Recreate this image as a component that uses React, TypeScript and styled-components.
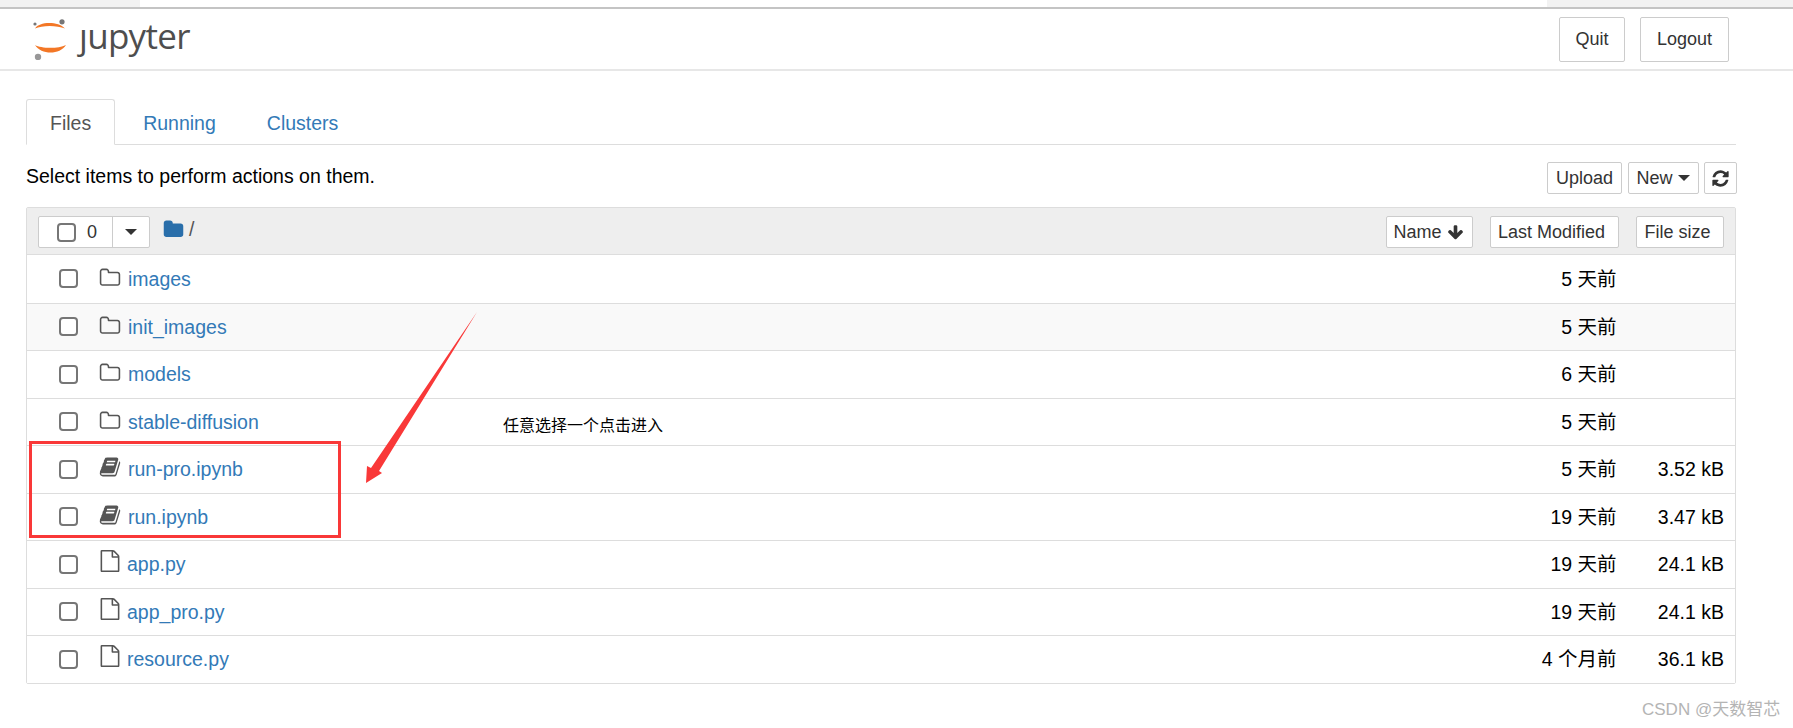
import React from "react";
import styled, { createGlobalStyle } from "styled-components";

const Global = createGlobalStyle`
  html, body { margin: 0; padding: 0; background: #fff; }
  body { font-family: "Liberation Sans", Arial, "Noto Sans CJK SC", sans-serif; color: #000; }
  * { box-sizing: border-box; }
`;

const Page = styled.div`
  position: relative;
  width: 1793px;
  height: 728px;
  overflow: hidden;
`;

const BrowserEdge = styled.div`
  height: 9px;
  background: #f2f2f2;
  border-bottom: 2px solid #c4c4c4;
  display: flex;
`;
const BrowserGap = styled.div`
  width: 1407px;
  height: 7px;
  margin-left: 140px;
  background: #fff;
`;

const Header = styled.header`
  height: 62px;
  border-bottom: 2px solid #e7e7e7;
  display: flex;
  align-items: flex-start;
  justify-content: space-between;
  padding: 8px 64px 0 33px;
`;

const Logo = styled.div`
  display: flex;
  align-items: center;
  height: 44px;
`;

const LogoText = styled.span`
  font-family: "Open Sans", sans-serif;
  font-size: 35px;
  line-height: 44px;
  color: #4e4e4e;
  margin-left: 10px;
  margin-top: -6px;
  letter-spacing: -0.7px;
`;

const HeaderActions = styled.div`
  display: flex;
  gap: 15px;
`;

const HeaderButton = styled.button`
  height: 45px;
  width: ${(p) => p.$w}px;
  border: 1px solid #ccc;
  border-radius: 2px;
  background: #fff;
  color: #333;
  font: 18px "Liberation Sans", sans-serif;
  padding: 0;
`;

const Main = styled.main`
  padding: 28px 57px 0 26px;
`;

const Tabs = styled.nav`
  height: 46px;
  display: flex;
  border-bottom: 1px solid #ddd;
`;

const Tab = styled.a`
  height: 46px;
  padding: 0 ${(p) => (p.$active ? 23 : 24)}px;
  margin-right: ${(p) => (p.$active ? 3 : 1)}px;
  line-height: 46px;
  font-size: 19.5px;
  color: ${(p) => (p.$active ? "#555" : "#337ab7")};
  background: ${(p) => (p.$active ? "#fff" : "transparent")};
  border: 1px solid ${(p) => (p.$active ? "#ddd" : "transparent")};
  border-bottom-color: ${(p) => (p.$active ? "#fff" : "transparent")};
  border-radius: 3px 3px 0 0;
`;

const ToolRow = styled.div`
  height: 62px;
  padding-top: 17px;
  display: flex;
  justify-content: space-between;
  align-items: flex-start;
`;

const Hint = styled.div`
  font-size: 19.5px;
  line-height: 28px;
`;

const ToolButtons = styled.div`
  display: flex;
  gap: 5.5px;
  margin-right: -1px;
`;

const SmallButton = styled.button`
  height: 32px;
  width: ${(p) => p.$w}px;
  display: inline-flex;
  align-items: center;
  justify-content: center;
  gap: 5px;
  border: 1px solid #ccc;
  border-radius: 2px;
  background: #fff;
  color: #333;
  font: 18px "Liberation Sans", sans-serif;
  padding: 0 ${(p) => p.$trail || 0}px 0 0;
`;

const Caret = styled.i`
  width: 0;
  height: 0;
  border-top: 6px solid #333;
  border-left: 6px solid transparent;
  border-right: 6px solid transparent;
`;

const Glyph = styled.svg`
  display: block;
  flex: none;
  fill: ${(p) => p.$color || "#333"};
`;

const List = styled.section`
  border: 1px solid #ddd;
  border-radius: 2px;
`;

const ListHead = styled.div`
  height: 47px;
  background: #eee;
  border-bottom: 1px solid #ddd;
  display: flex;
  align-items: flex-start;
  padding: 8px 11.5px 0 11px;
`;

const SelectGroup = styled.div`
  display: flex;
  height: 32px;
  width: 112px;
  border: 1px solid #ccc;
  border-radius: 2px;
  background: #fff;
`;

const SelectMain = styled.div`
  width: 74px;
  border-right: 1px solid #ccc;
  display: flex;
  align-items: center;
  padding-left: 18px;
  gap: 11px;
  font-size: 18px;
  color: #333;
`;

const SelectCaret = styled.div`
  flex: 1;
  display: flex;
  align-items: center;
  justify-content: center;
`;

const Crumb = styled.div`
  flex: 1;
  display: flex;
  align-items: flex-start;
  gap: 5px;
  margin-left: 13px;
  padding-top: 3px;
  color: #555;
  font-size: 19.5px;
  line-height: 20px;
`;

const SortButtons = styled.div`
  display: flex;
  gap: 17px;
`;

const Check = styled.input.attrs({ type: "checkbox" })`
  appearance: none;
  flex: none;
  margin: 0;
  width: 19px;
  height: 19px;
  background: #fff;
  border: 2px solid #767676;
  border-radius: 4px;
`;

const Row = styled.div`
  height: 47.5px;
  display: flex;
  align-items: center;
  padding: 0 11px 0 32px;
  background: ${(p) => (p.$shaded ? "#f9f9f9" : "#fff")};
  border-top: ${(p) => (p.$first ? "0" : "1px solid #ddd")};
  font-size: 19.5px;
  line-height: 24px;
`;

const IconSlot = styled.div`
  width: 22px;
  margin-left: 20.5px;
  margin-bottom: ${(p) => p.$lift}px;
  flex: none;
`;

const FileName = styled.a`
  flex: 1;
  margin-left: ${(p) => p.$gap}px;
  color: #337ab7;
`;

const Modified = styled.span`
  display: block;
  height: 24px;
  text-align: right;
`;

const Size = styled.span`
  display: block;
  height: 24px;
  width: 107.5px;
  text-align: right;
`;

const RedBox = styled.div`
  position: absolute;
  left: 29px;
  top: 441px;
  width: 312px;
  height: 97px;
  border: 3px solid #f93838;
`;

const ArrowMark = styled.svg`
  position: absolute;
  left: 360px;
  top: 305px;
`;

const Note = styled.div`
  position: absolute;
  left: 503px;
  top: 414px;
  font-size: 16px;
  line-height: 20px;
  color: #000;
  font-family: "Noto Sans CJK SC", sans-serif;
`;

const Watermark = styled.div`
  position: absolute;
  left: 1642px;
  top: 700px;
  font-size: 17px;
  line-height: 20px;
  color: #b4b4b4;
  white-space: nowrap;
  font-family: "Liberation Sans", "Noto Sans CJK SC", sans-serif;
`;

const PATHS = {
  folderO:
    "M1600 1312v-704q0-40-28-68t-68-28h-704q-40 0-68-28t-28-68v-64q0-40-28-68t-68-28h-320q-40 0-68 28t-28 68v960q0 40 28 68t68 28h1216q40 0 68-28t28-68zm128-704v704q0 92-66 158t-158 66h-1216q-92 0-158-66t-66-158v-960q0-92 66-158t158-66h320q92 0 158 66t66 158v32h672q92 0 158 66t66 158z",
  folder:
    "M1728 608v704q0 92-66 158t-158 66h-1216q-92 0-158-66t-66-158v-960q0-92 66-158t158-66h320q92 0 158 66t66 158v32h672q92 0 158 66t66 158z",
  file:
    "M1596 380q28 28 48 76t20 88v1152q0 40-28 68t-68 28h-1344q-40 0-68-28t-28-68v-1600q0-40 28-68t68-28h896q40 0 88 20t76 48zm-444-244v376h376q-10-29-22-41l-313-313q-12-12-41-22zm384 1528v-1024h-416q-40 0-68-28t-28-68v-416h-768v1536h1280z",
  book:
    "M1703 478q40 57 18 129l-275 906q-19 64-76.5 107.5t-122.5 43.5h-923q-77 0-148.5-53.5t-99.5-131.5q-24-67-2-127 0-4 3-27t4-37q1-8-3-21.5t-3-19.5q2-11 8-21t16.5-23.5 16.5-23.5q23-38 45-91.5t30-91.5q3-10 .5-30t-.5-28q3-11 17-28t17-23q21-36 42-92t25-90q1-9-2.5-32t.5-28q4-13 22-30.5t22-22.5q19-26 42.5-84.5t27.5-96.5q1-8-3-25.5t-2-26.5q2-8 9-18t18-23 17-21q8-12 16.5-30.5t15-35 16-36 19.5-32 26.5-23.5 36-11.5 47.5 5.5l-1 3q38-9 51-9h761q74 0 114 56t18 130l-274 906q-36 119-71.5 153.5t-128.5 34.5h-869q-27 0-38 15-11 16-1 43 24 70 144 70h923q29 0 56-15.5t35-41.5l300-987q7-22 5-57 38 15 59 43zm-1064 2q-4 13 2 22.5t20 9.5h608q13 0 25.5-9.5t16.5-22.5l21-64q4-13-2-22.5t-20-9.5h-608q-13 0-25.5 9.5t-16.5 22.5zm-83 256q-4 13 2 22.5t20 9.5h608q13 0 25.5-9.5t16.5-22.5l21-64q4-13-2-22.5t-20-9.5h-608q-13 0-25.5 9.5t-16.5 22.5z",
  refresh:
    "M1639 1056q0 5-1 7-64 268-268 434.5t-478 166.5q-146 0-282.5-55t-243.5-157l-129 129q-19 19-45 19t-45-19-19-45v-448q0-26 19-45t45-19h448q26 0 45 19t19 45-19 45l-137 137q71 66 161 102t187 36q134 0 250-65t186-179q11-17 53-117 8-23 30-23h192q13 0 22.5 9.5t9.5 22.5zm25-800v448q0 26-19 45t-45 19h-448q-26 0-45-19t-19-45 19-45l138-138q-148-137-349-137-134 0-250 65t-186 179q-11 17-53 117-8 23-30 23h-199q-13 0-22.5-9.5t-9.5-22.5v-7q65-268 270-434.5t480-166.5q146 0 284 55.5t245 156.5l130-129q19-19 45-19t45 19 19 45z",
  arrowDown:
    "M1675 832q0 53-37 90l-651 652q-39 37-91 37-53 0-90-37l-651-652q-38-36-38-90 0-53 38-91l74-75q39-37 91-37 53 0 90 37l294 294v-704q0-52 38-90t90-38h128q52 0 90 38t38 90v704l294-294q37-37 90-37 52 0 91 37l75 75q37 39 37 91z",
};

const FA = ({ d, size, color }: { d: string; size: number; color?: string }) => (
  <Glyph $color={color} width={size} height={size} viewBox="0 0 1792 1792">
    <path d={d} />
  </Glyph>
);

const JupyterMark = () => (
  <svg width="36" height="42" viewBox="0 0 36 42">
    <path d="M2 10.5 C6 3.5 25 3 32 10.5 C24 7 9 7 2 10.5 Z" fill="#f37726" />
    <path d="M2 27 C8 30.5 25 31 33 27 C27 37 8 37 2 27 Z" fill="#f37726" />
    <circle cx="29" cy="3.8" r="2.6" fill="#767677" />
    <circle cx="2" cy="6" r="1.6" fill="#767677" />
    <circle cx="5" cy="39" r="3.2" fill="#989798" />
  </svg>
);

type Item = { name: string; kind: "dir" | "nb" | "file"; when: string; size?: string; shaded?: boolean };

const ITEMS: Item[] = [
  { name: "images", kind: "dir", when: "5 天前" },
  { name: "init_images", kind: "dir", when: "5 天前", shaded: true },
  { name: "models", kind: "dir", when: "6 天前" },
  { name: "stable-diffusion", kind: "dir", when: "5 天前" },
  { name: "run-pro.ipynb", kind: "nb", when: "5 天前", size: "3.52 kB" },
  { name: "run.ipynb", kind: "nb", when: "19 天前", size: "3.47 kB" },
  { name: "app.py", kind: "file", when: "19 天前", size: "24.1 kB" },
  { name: "app_pro.py", kind: "file", when: "19 天前", size: "24.1 kB" },
  { name: "resource.py", kind: "file", when: "4 个月前", size: "36.1 kB" },
];

const KIND = {
  dir: { d: PATHS.folderO, lift: 2, gap: 7.5 },
  nb: { d: PATHS.book, lift: 4, gap: 7.5 },
  file: { d: PATHS.file, lift: 6, gap: 6.5 },
};

export default function App() {
  return (
    <Page>
      <Global />
      <BrowserEdge>
        <BrowserGap />
      </BrowserEdge>
      <Header>
        <Logo>
          <JupyterMark />
          <LogoText>ȷupyter</LogoText>
        </Logo>
        <HeaderActions>
          <HeaderButton $w={66}>Quit</HeaderButton>
          <HeaderButton $w={89}>Logout</HeaderButton>
        </HeaderActions>
      </Header>
      <Main>
        <Tabs>
          <Tab $active>Files</Tab>
          <Tab>Running</Tab>
          <Tab>Clusters</Tab>
        </Tabs>
        <ToolRow>
          <Hint>Select items to perform actions on them.</Hint>
          <ToolButtons>
            <SmallButton $w={75}>Upload</SmallButton>
            <SmallButton $w={71}>
              New <Caret />
            </SmallButton>
            <SmallButton $w={33}>
              <FA d={PATHS.refresh} size={19} />
            </SmallButton>
          </ToolButtons>
        </ToolRow>
        <List>
          <ListHead>
            <SelectGroup>
              <SelectMain>
                <Check />0
              </SelectMain>
              <SelectCaret>
                <Caret />
              </SelectCaret>
            </SelectGroup>
            <Crumb>
              <FA d={PATHS.folder} size={21} color="#296eaa" />/
            </Crumb>
            <SortButtons>
              <SmallButton $w={87} $trail={1}>
                Name <FA d={PATHS.arrowDown} size={17} />
              </SmallButton>
              <SmallButton $w={129} $trail={5}>Last Modified</SmallButton>
              <SmallButton $w={88} $trail={4}>File size</SmallButton>
            </SortButtons>
          </ListHead>
          {ITEMS.map((it, i) => (
            <Row key={it.name} $shaded={it.shaded} $first={i === 0}>
              <Check />
              <IconSlot $lift={KIND[it.kind].lift}>
                <FA d={KIND[it.kind].d} size={22} color="#555" />
              </IconSlot>
              <FileName $gap={KIND[it.kind].gap}>{it.name}</FileName>
              <Modified>{it.when}</Modified>
              <Size>{it.size}</Size>
            </Row>
          ))}
        </List>
      </Main>
      <RedBox />
      <ArrowMark width="125" height="185" viewBox="360 305 125 185">
        <polygon points="477,312 379,471 382,473 366,483 367,466 371,468" fill="#f93838" />
      </ArrowMark>
      <Note>任意选择一个点击进入</Note>
      <Watermark>CSDN @天数智芯</Watermark>
    </Page>
  );
}
